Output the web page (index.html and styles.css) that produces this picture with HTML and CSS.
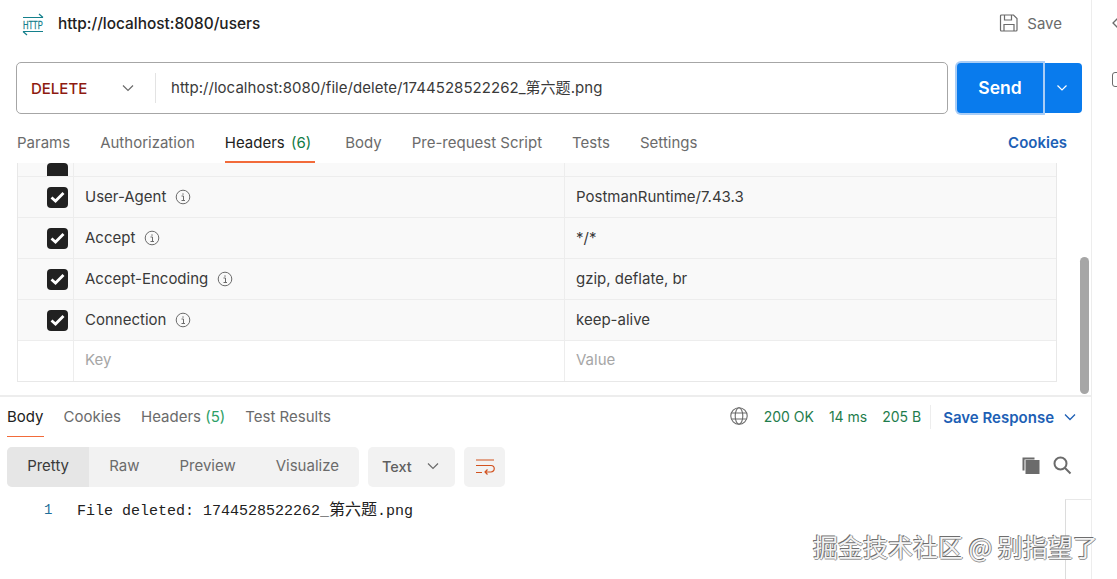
FILE: index.html
```html
<!DOCTYPE html>
<html lang="en">
<head>
<meta charset="utf-8">
<title>Postman</title>
<link rel="stylesheet" href="styles.css">
</head>
<body>
<div class="app">
  <main class="main">
    <header class="header">
      <svg class="http-icon" width="24" height="24" viewBox="0 0 24 24" fill="none" stroke="#14808c" stroke-width="1.200">
        <path d="M2 5.500h20M18 2l4 3.500M2 19.500h20M2 19.500l4 3.500"/>
        <text class="http-text" transform="translate(2 16.500) scale(.95 1.300)">HTTP</text>
      </svg>
      <h1 class="title">http://localhost:8080/users</h1>
      <div class="save">
        <svg width="20" height="20" viewBox="0 0 20 20" fill="none" stroke="#6b6b6b" stroke-width="1.200">
          <path d="M1.500 3a1 1 0 0 1 1-1h12l3.500 3.500V17a1 1 0 0 1-1 1H2.500a1 1 0 0 1-1-1z"/>
          <path d="M5.500 2v5h7V2M5 18v-6.500h10V18"/>
        </svg>
        <span>Save</span>
      </div>
    </header>

    <section class="url-row">
      <div class="url-box">
        <div class="method">
          <span>DELETE</span>
          <svg width="12" height="8" viewBox="0 0 12 8" fill="none" stroke="#6b6b6b" stroke-width="1.200"><path d="M1 1.500l5 5 5-5"/></svg>
        </div>
        <div class="url-text">http://localhost:8080/file/delete/1744528522262_第六题.png</div>
      </div>
      <div class="send-group">
        <button class="send">Send</button>
        <button class="send-more">
          <svg width="12" height="8" viewBox="0 0 12 8" fill="none" stroke="#fff" stroke-width="1.200"><path d="M1.500 1.500l4.500 4.500 4.500-4.500"/></svg>
        </button>
      </div>
    </section>

    <nav class="req-tabs">
      <span class="tab">Params</span>
      <span class="tab">Authorization</span>
      <span class="tab tab-active">Headers <em class="count">(6)</em></span>
      <span class="tab">Body</span>
      <span class="tab">Pre-request Script</span>
      <span class="tab">Tests</span>
      <span class="tab">Settings</span>
      <span class="cookies">Cookies</span>
    </nav>

    <section class="headers-pane">
      <div class="table">
        <div class="row row-cut row-on">
          <div class="cell cell-check"><span class="check"></span></div>
          <div class="cell cell-key"></div>
          <div class="cell cell-val"></div>
        </div>
        <div class="row row-on">
          <div class="cell cell-check"><span class="check"><svg width="15" height="12" viewBox="0 0 15 12"><path d="M1.500 6.500l4 3.500 8-8" fill="none" stroke="#fff" stroke-width="2.800"/></svg></span></div>
          <div class="cell cell-key">User-Agent<svg class="info" width="16" height="16" viewBox="0 0 16 16"><circle cx="8" cy="8" r="6.800" fill="none" stroke="#6b6b6b"/><path d="M6.500 7h2v4M6.500 11.500h3.500M8 4.300v1.500" fill="none" stroke="#6b6b6b"/></svg></div>
          <div class="cell cell-val">PostmanRuntime/7.43.3</div>
        </div>
        <div class="row row-on">
          <div class="cell cell-check"><span class="check"><svg width="15" height="12" viewBox="0 0 15 12"><path d="M1.500 6.500l4 3.500 8-8" fill="none" stroke="#fff" stroke-width="2.800"/></svg></span></div>
          <div class="cell cell-key">Accept<svg class="info" width="16" height="16" viewBox="0 0 16 16"><circle cx="8" cy="8" r="6.800" fill="none" stroke="#6b6b6b"/><path d="M6.500 7h2v4M6.500 11.500h3.500M8 4.300v1.500" fill="none" stroke="#6b6b6b"/></svg></div>
          <div class="cell cell-val">*/*</div>
        </div>
        <div class="row row-on">
          <div class="cell cell-check"><span class="check"><svg width="15" height="12" viewBox="0 0 15 12"><path d="M1.500 6.500l4 3.500 8-8" fill="none" stroke="#fff" stroke-width="2.800"/></svg></span></div>
          <div class="cell cell-key">Accept-Encoding<svg class="info" width="16" height="16" viewBox="0 0 16 16"><circle cx="8" cy="8" r="6.800" fill="none" stroke="#6b6b6b"/><path d="M6.500 7h2v4M6.500 11.500h3.500M8 4.300v1.500" fill="none" stroke="#6b6b6b"/></svg></div>
          <div class="cell cell-val">gzip, deflate, br</div>
        </div>
        <div class="row row-on">
          <div class="cell cell-check"><span class="check"><svg width="15" height="12" viewBox="0 0 15 12"><path d="M1.500 6.500l4 3.500 8-8" fill="none" stroke="#fff" stroke-width="2.800"/></svg></span></div>
          <div class="cell cell-key">Connection<svg class="info" width="16" height="16" viewBox="0 0 16 16"><circle cx="8" cy="8" r="6.800" fill="none" stroke="#6b6b6b"/><path d="M6.500 7h2v4M6.500 11.500h3.500M8 4.300v1.500" fill="none" stroke="#6b6b6b"/></svg></div>
          <div class="cell cell-val">keep-alive</div>
        </div>
        <div class="row">
          <div class="cell cell-check"></div>
          <div class="cell cell-key placeholder">Key</div>
          <div class="cell cell-val placeholder">Value</div>
        </div>
      </div>
      <div class="scroll-thumb"></div>
    </section>

    <section class="response">
      <nav class="res-tabs">
        <span class="rtab rtab-active">Body</span>
        <span class="rtab">Cookies</span>
        <span class="rtab">Headers <em class="count-light">(5)</em></span>
        <span class="rtab">Test Results</span>
        <div class="status">
          <svg class="globe" width="20" height="20" viewBox="0 0 20 20" fill="none" stroke="#6b6b6b" stroke-width="1.100"><circle cx="10" cy="10" r="8.200"/><ellipse cx="10" cy="10" rx="3.800" ry="8.200"/><path d="M2.500 7h15M2.500 13h15"/></svg>
          <span>200 OK</span>
          <span>14 ms</span>
          <span>205 B</span>
        </div>
        <div class="save-response">
          <span>Save Response</span>
          <svg width="12" height="8" viewBox="0 0 12 8" fill="none" stroke="#1d5fb5" stroke-width="1.300"><path d="M1 1.500l5 5 5-5"/></svg>
        </div>
      </nav>

      <div class="toolbar">
        <div class="segments">
          <span class="seg seg-active">Pretty</span>
          <span class="seg">Raw</span>
          <span class="seg">Preview</span>
          <span class="seg">Visualize</span>
        </div>
        <div class="format">
          <span>Text</span>
          <svg width="12" height="8" viewBox="0 0 12 8" fill="none" stroke="#6b6b6b" stroke-width="1.200"><path d="M1 1.500l5 5 5-5"/></svg>
        </div>
        <div class="wrap-btn">
          <svg width="20" height="18" viewBox="0 0 20 18" fill="none" stroke="#d2521f" stroke-width="1.200"><path d="M1 2h18M1 7.500h15a2.800 2.800 0 0 1 0 6.500h-6M12.500 11.500L10 14l2.500 2.500M1 14.500h6"/></svg>
        </div>
        <div class="tools">
          <svg width="20" height="20" viewBox="0 0 20 20"><path d="M1.500 2.500h12v2h-10v11h-2z" fill="#6b6b6b"/><rect x="4.500" y="5" width="14" height="14" fill="#6b6b6b"/></svg>
          <svg width="20" height="20" viewBox="0 0 20 20" fill="none" stroke="#6b6b6b" stroke-width="2"><circle cx="8.500" cy="8.500" r="6"/><path d="M13 13l5.500 5.500"/></svg>
        </div>
      </div>

      <div class="code">
        <span class="line-no">1</span>
        <code class="code-text">File deleted: 1744528522262_<span class="cjk">第六题</span>.png</code>
      </div>
      <div class="editor-corner"></div>
    </section>
  </main>

  <aside class="side">
    <svg width="8" height="14" viewBox="0 0 8 14" fill="none" stroke="#6b6b6b" stroke-width="1.300"><path d="M7 1L1 7l6 6"/></svg>
    <span class="side-doc"></span>
  </aside>
</div>
<div class="watermark">掘金技术社区 @ 别指望了</div>
</body>
</html>
```
FILE: styles.css
```css
* { box-sizing: border-box; }
html, body { margin: 0; height: 100%; overflow: hidden; background: #fff; }
body { font-family: Inter, "Noto Sans CJK SC", sans-serif; font-size: 15px; color: #212121; }
em { font-style: normal; }

.app { display: flex; height: 579px; }
.main { width: 1092px; flex: none; border-right: 1px solid #ededed; display: flex; flex-direction: column; }
.side { flex: 1; display: flex; flex-direction: column; gap: 42px; padding: 16px 0 0 20px; }
.side-doc { display: block; width: 10px; height: 15px; border: 1.500px solid #6b6b6b; border-radius: 3px; }

.header { height: 62px; display: flex; align-items: center; padding: 0 29px 15px 21px; flex: none; }
.http-icon { flex: none; }
.http-text { font: 8px "Liberation Sans", sans-serif; fill: #14808c; stroke: #14808c; stroke-width: 0.200px; }
.title { margin: 0 0 0 13px; font-size: 15.400px; font-weight: 500; color: #212121; }
.save { margin-left: auto; display: flex; align-items: center; gap: 8px; color: #6b6b6b; font-size: 15px; padding-bottom: 1px; }

.url-row { display: flex; padding: 0 9px 0 16px; height: 52px; flex: none; }
.url-box { flex: none; width: 932px; height: 52px; border: 1px solid #a6a6a6; border-radius: 5px; display: flex; align-items: center; }
.method { width: 139px; height: 30px; padding: 0 21px 0 14px; border-right: 1px solid #e3e3e3; display: flex; align-items: center; justify-content: space-between; color: #8e1a10; font-weight: 500; font-size: 15px; }
.url-text { padding-left: 15px; padding-bottom: 3px; font-size: 15px; letter-spacing: 0.040px; color: #3a3a3a; }
.send-group { margin-left: 9px; display: flex; height: 50px; margin-top: 1px; }
.send { width: 86px; height: 50px; padding: 0 0 2px; background: #097bed; color: #fff; border: 0; border-radius: 4px 0 0 4px; font: 600 17.500px Inter, sans-serif; box-shadow: 0 0 0 2px #a9cdf6; }
.send-more { width: 37px; height: 50px; margin-left: 2px; background: #097bed; border: 0; border-radius: 0 4px 4px 0; display: flex; align-items: center; justify-content: center; padding: 0 3px 0 0; }

.req-tabs { height: 49px; flex: none; display: flex; align-items: flex-end; padding: 0 24px 0 17px; gap: 30px; }
.tab { height: 37px; padding-top: 7px; color: #6b6b6b; white-space: nowrap; border-bottom: 2px solid transparent; }
.tab-active { color: #212121; border-bottom-color: #f26b3a; padding-right: 4px; }
.count { color: #0f7b45; margin-left: 2px; }
.cookies { margin-left: auto; height: 37px; padding-top: 7px; color: #1d5fb5; font-weight: 600; }

.headers-pane { position: relative; height: 232px; flex: none; border-bottom: 2px solid #ededed; box-sizing: content-box; overflow: hidden; }
.table { margin-left: 17px; width: 1040px; display: flex; flex-direction: column; border-left: 1px solid #e8e8e8; border-right: 1px solid #e8e8e8; border-bottom: 1px solid #e8e8e8; }
.row { height: 41px; display: grid; grid-template-columns: 55px 491px 1fr; border-bottom: 1px solid #ededed; flex: none; }
.row:last-child { border-bottom: 0; height: 40px; }
.row:last-child .cell { padding-bottom: 3px; }
.row-on { background: #f9f9f9; }
.row-cut { height: 14px; overflow: hidden; }
.row-cut .cell-check { align-items: flex-end; padding-bottom: 10px; }
.cell { display: flex; align-items: center; padding-left: 11px; padding-bottom: 1px; border-left: 1px solid #ededed; font-size: 15px; color: #3a3a3a; }
.cell-check { border-left: 0; padding-left: 29px; padding-bottom: 0; }
.check { width: 21px; height: 21px; flex: none; background: #212121; border-radius: 4px; display: flex; align-items: center; justify-content: center; }
.info { margin-left: 9px; flex: none; }
.placeholder { color: #a6a6a6; }
.scroll-thumb { position: absolute; left: 1080px; top: 94px; width: 9px; height: 137px; background: #a6a6a6; border-radius: 5px; }

.response { position: relative; flex: 1; display: flex; flex-direction: column; }
.res-tabs { height: 40px; flex: none; display: flex; align-items: center; padding: 0 15px 0 7px; gap: 20px; }
.rtab { height: 40px; padding-top: 10px; color: #6b6b6b; border-bottom: 1px solid transparent; white-space: nowrap; }
.rtab-active { color: #212121; border-bottom: 1px solid #f26b3a; }
.count-light { color: #2da066; }
.status { margin-left: auto; display: flex; align-items: center; gap: 15px; padding-bottom: 2px; color: #1f7d4d; font-size: 14px; }
.save-response { height: 24px; padding-left: 12px; margin-left: -11px; border-left: 1px solid #ededed; display: flex; align-items: center; gap: 10px; color: #1d5fb5; font-weight: 600; font-size: 15px; }

.toolbar { margin-top: 10px; height: 40px; flex: none; display: flex; align-items: stretch; padding: 0 19px 0 7px; }
.segments { width: 352px; background: #f2f2f2; border-radius: 5px; display: flex; overflow: hidden; }
.seg { height: 100%; display: flex; align-items: center; color: #6b6b6b; font-size: 15px; padding: 0 20px 3px; }
.seg-active { width: 84px; justify-content: center; padding: 0 0 3px; color: #3a3a3a; background: #e6e6e6; }
.format { width: 87px; margin-left: 9px; background: #f2f2f2; border-radius: 5px; display: flex; align-items: center; justify-content: space-between; padding: 0 16px 2px 14px; color: #5f5f5f; font-size: 14.500px; font-weight: 500; }
.wrap-btn { width: 41px; margin-left: 9px; background: #f2f2f2; border-radius: 5px; display: flex; align-items: center; justify-content: center; }
.tools { margin-left: auto; display: flex; align-items: center; gap: 11px; padding-bottom: 4px; color: #6b6b6b; }

.code { display: flex; align-items: center; height: 24px; margin-top: 9px; padding-left: 44px; }
.line-no { width: 33px; flex: none; padding-top: 3px; font: 14px "Liberation Mono", monospace; color: #1f6e9a; }
.code-text { font: 15px "Liberation Mono", "Noto Sans CJK SC", monospace; color: #212121; }
.cjk { font-size: 16px; }
.editor-corner { position: absolute; left: 1065px; top: 102px; width: 26px; bottom: 0; border-left: 1px solid #dcdcdc; border-top: 1px solid #e8e8e8; }

.watermark { position: absolute; left: 813px; top: 530px; font: 25px "Noto Sans CJK SC", sans-serif; line-height: 33px; color: #f4f4f4; text-shadow: -1px -1px 0 #6e6e6e, 1px 0 0 #8a8a8a, 0 1px 0 #999; white-space: nowrap; }
```
